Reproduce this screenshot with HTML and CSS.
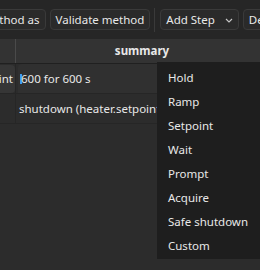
FILE: index.html
```html
<!DOCTYPE html>
<html>
<head>
	<meta charset="utf-8">
	<title>Method editor</title>
	<link rel="stylesheet" href="styles.css">
</head>
<body>
	<div class="toolbar">
		<button class="btn first">Save method as</button>
		<button class="btn">Validate method</button>
		<span class="sep"></span>
		<button class="btn combo">Add Step
			<svg class="chev" width="8" height="5" viewBox="0 0 8 5"><path d="M1 1l3 3l3-3" fill="none" stroke="#c8c8c8" stroke-width="1.1"/></svg>
		</button>
		<button class="btn">Delete Step</button>
	</div>
	<div class="table">
		<div class="head">
			<div class="col-a"></div>
			<div class="col-b">summary</div>
		</div>
		<div class="row active">
			<div class="col-a"><span class="cell-a">Setpoint</span></div>
			<div class="col-b"><span class="edit"><i class="caret"></i>600 for 600 s</span></div>
		</div>
		<div class="row">
			<div class="col-a"></div>
			<div class="col-b"><span class="text">shutdown (heater.setpoint = 25)</span></div>
		</div>
	</div>
	<ul class="menu">
		<li>Hold</li>
		<li>Ramp</li>
		<li>Setpoint</li>
		<li>Wait</li>
		<li>Prompt</li>
		<li>Acquire</li>
		<li>Safe shutdown</li>
		<li>Custom</li>
	</ul>
</body>
</html>
```

FILE: styles.css
```css
*{margin:0;padding:0;box-sizing:border-box;}
body{
	width:260px;
	height:270px;
	overflow:hidden;
	position:relative;
	background:#2c2c2c;
	color:#e8e8e8;
	font-family:"Noto Sans","Open Sans",sans-serif;
	font-size:11.5px;
}
.toolbar{
	height:39px;
	background:#262626;
	display:flex;
	align-items:center;
	gap:4px;
	margin-left:-52px;
	white-space:nowrap;
}
.btn{
	height:21px;
	padding:0 5px;
	border:1px solid #3a3a3a;
	border-radius:4px;
	background:#2a2a2a;
	color:#e8e8e8;
	font:inherit;
	display:flex;
	align-items:center;
	flex:none;
}
.sep{
	width:1px;
	height:24px;
	background:#3a3a3a;
	margin:0 1px 0 0;
	flex:none;
}
.combo{gap:10px;padding-right:5px;}
.chev{margin-top:1px;}
.table{width:290px;}
.head{
	height:25px;
	display:flex;
	background:#333333;
	border-bottom:1px solid #202020;
}
.head .col-a{border-right:1px solid #4a4a4a;}
.head .col-b{
	text-align:center;
	font-weight:bold;
	line-height:24px;
	padding-right:22px;
}
.col-a{width:16px;flex:none;}
.col-b{flex:1;}
.row{
	height:30px;
	display:flex;
	border-bottom:1px solid #262626;
}
.row .col-a{border-right:1px solid #262626;}
.cell-a{
	display:block;
	height:28px;
	margin-top:1px;
	line-height:28px;
	background:#363636;
	border-radius:0 4px 4px 0;
	direction:rtl;
	overflow:hidden;
	padding-right:2px;
}
.edit{
	display:flex;
	align-items:center;
	height:29px;
	margin-left:2px;
	padding-left:2px;
	background:#303030;
	border-radius:4px 0 0 0;
}
.caret{
	width:2px;
	height:10px;
	background:#3d9cf0;
	margin-right:-1px;
}
.text{
	display:block;
	line-height:30px;
	padding-left:3px;
	white-space:nowrap;
}
.menu{
	position:absolute;
	left:157px;
	top:62px;
	width:110px;
	height:197px;
	background:#1e1e1e;
	list-style:none;
	padding-top:4px;
}
.menu li{
	height:24px;
	line-height:24px;
	padding-left:11px;
}
```
